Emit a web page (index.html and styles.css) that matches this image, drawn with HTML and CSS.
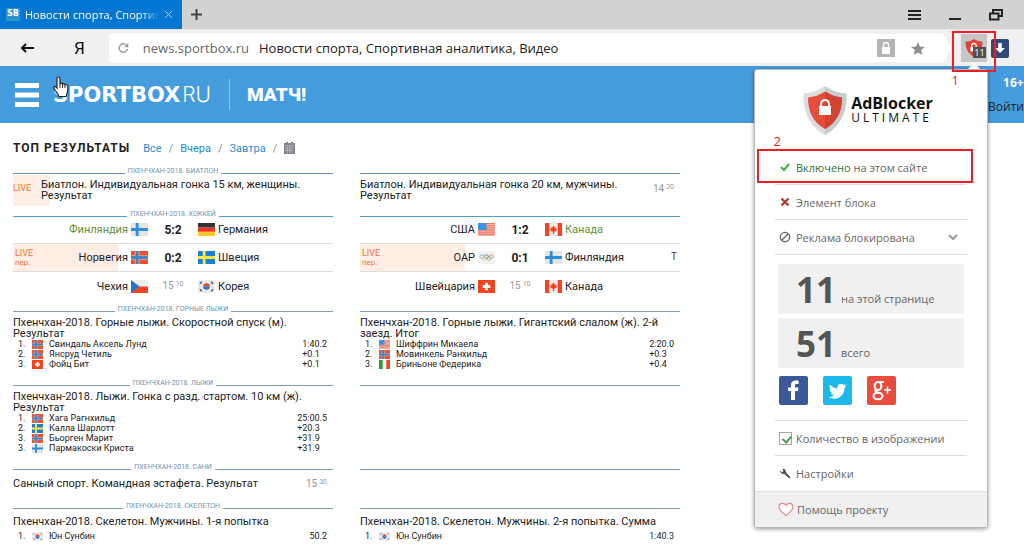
FILE: index.html
```html
<!DOCTYPE html>
<html lang="ru">
<head>
<meta charset="utf-8">
<title>Новости спорта, Спортивная аналитика, Видео</title>
<link rel="stylesheet" href="styles.css">
</head>
<body>
<svg class="defs" aria-hidden="true">
  <symbol id="fi" viewBox="0 0 18 14" preserveAspectRatio="none"><path fill="#e4e6e6" d="M0 0h18v14H0z"/><path fill="#2f8de0" d="M5 0h3v14H5zM0 5.500h18v3H0z"/></symbol>
  <symbol id="no" viewBox="0 0 18 14" preserveAspectRatio="none"><path fill="#f4502c" d="M0 0h18v14H0z"/><path fill="#eba595" d="M4 0h5v14H4zM0 4.500h18v5H0z"/><path fill="#3f86c8" d="M5 0h3v14H5zM0 5.500h18v3H0z"/></symbol>
  <symbol id="se" viewBox="0 0 18 14" preserveAspectRatio="none"><path fill="#1d7fd6" d="M0 0h18v14H0z"/><path fill="#ffe54a" d="M5 0h3v14H5zM0 5.500h18v3H0z"/></symbol>
  <symbol id="ch" viewBox="0 0 18 14" preserveAspectRatio="none"><path fill="#f4431f" d="M0 0h18v14H0z"/><path fill="#fff" d="M7.500 3h3v8h-3zM5 5.500h8v3H5z"/></symbol>
  <symbol id="de" viewBox="0 0 18 14" preserveAspectRatio="none"><path fill="#333" d="M0 0h18v5H0z"/><path fill="#e8391f" d="M0 5h18v4.500H0z"/><path fill="#fdc82f" d="M0 9.500h18V14H0z"/></symbol>
  <symbol id="cz" viewBox="0 0 18 14" preserveAspectRatio="none"><path fill="#eee" d="M0 0h18v7H0z"/><path fill="#f4431f" d="M0 7h18v7H0z"/><path fill="#2874c8" d="M0 0l9 7-9 7z"/></symbol>
  <symbol id="kr" viewBox="0 0 18 14" preserveAspectRatio="none"><path fill="#ebebeb" d="M0 0h18v14H0z"/><path fill="#e8492f" d="M5.500 7a3.500 3.500 0 0 1 7 0z"/><path fill="#2a6fc4" d="M5.500 7a3.500 3.500 0 0 0 7 0z"/><path stroke="#555" stroke-width="1.500" d="M2 4l2-2M14 2l2 2M2 10l2 2M14 12l2-2"/></symbol>
  <symbol id="us" viewBox="0 0 18 14" preserveAspectRatio="none"><path fill="#f7c3b8" d="M0 0h18v14H0z"/><path stroke="#ec6a55" stroke-width="1" d="M0 .5h18M0 2.500h18M0 4.500h18M0 6.500h18M0 8.500h18M0 10.500h18M0 12.500h18"/><path fill="#3f93e6" d="M0 0h9v7.500H0z"/></symbol>
  <symbol id="ca" viewBox="0 0 18 14" preserveAspectRatio="none"><path fill="#ebebeb" d="M0 0h18v14H0z"/><path fill="#f4431f" d="M0 0h4.500v14H0zM13.500 0H18v14h-4.500zM9 2.500l1 2 1.200-.5-.2 2L12.700 6l-.7 2.500-2.400 1V12H8.400V9.500L6 8.500 5.300 6l1.700 0-.2-2 1.200.5z"/></symbol>
  <symbol id="it" viewBox="0 0 18 14" preserveAspectRatio="none"><path fill="#f2f2f2" d="M0 0h18v14H0z"/><path fill="#2c9a3f" d="M0 0h6v14H0z"/><path fill="#f4431f" d="M12 0h6v14h-6z"/></symbol>
  <symbol id="oar" viewBox="0 0 18 14" preserveAspectRatio="none"><path fill="#f3f3f3" d="M0 0h18v14H0z"/><g fill="none" stroke-width="1"><circle cx="4" cy="6" r="2" stroke="#7fb0d8"/><circle cx="9" cy="6" r="2" stroke="#777"/><circle cx="14" cy="6" r="2" stroke="#e09090"/><circle cx="6.500" cy="8" r="2" stroke="#dccb7c"/><circle cx="11.500" cy="8" r="2" stroke="#7ab88a"/></g></symbol>
</svg>

<div class="browser">
  <div class="tabs">
    <div class="tab">
      <span class="favicon">SB</span>
      <span class="tab-title">Новости спорта, Спортив</span>
      <button class="tab-close" aria-label="Закрыть вкладку"><svg width="9" height="9" viewBox="0 0 9 9"><path d="M1 1l7 7M8 1L1 8" stroke="#a9cff2"/></svg></button>
    </div>
    <button class="tab-new" aria-label="Новая вкладка"><svg width="11" height="11" viewBox="0 0 11 11"><path d="M5.500 0v11M0 5.500h11" stroke="#444" stroke-width="2"/></svg></button>
    <div class="window-buttons">
      <button aria-label="Меню"><svg width="13" height="10" viewBox="0 0 13 10"><path d="M0 1h13M0 5h13M0 9h13" stroke="#222" stroke-width="2"/></svg></button>
      <button aria-label="Свернуть"><svg width="12" height="10" viewBox="0 0 12 10"><path d="M0 9h12" stroke="#222" stroke-width="2"/></svg></button>
      <button aria-label="Развернуть"><svg width="14" height="12" viewBox="0 0 14 12"><path d="M4 3.500V1h9v6h-3M1 4.500h8.500v6H1z" fill="none" stroke="#222" stroke-width="2"/></svg></button>
    </div>
  </div>

  <div class="toolbar">
    <button class="back" aria-label="Назад"><svg width="14" height="10" viewBox="0 0 14 10"><path d="M14 5H2M6 1L2 5l4 4" fill="none" stroke="#111" stroke-width="2"/></svg></button>
    <button class="yandex">Я</button>
    <form class="address">
      <button type="button" aria-label="Обновить"><svg width="11" height="12" viewBox="0 0 11 12"><path d="M9.200 4.200A4.200 4.200 0 1 0 9.500 7" fill="none" stroke="#999" stroke-width="1.400"/><path d="M10.300 1v4.200H6.200z" fill="#999"/></svg></button>
      <label for="url">news.sportbox.ru</label>
      <input id="url" type="text" value="Новости спорта, Спортивная аналитика, Видео">
      <button type="button" class="lock" aria-label="Защита"><svg width="18" height="18" viewBox="0 0 18 18"><path fill="#b5b5b5" d="M0 0h18v18H0z"/><path fill="#fff" d="M5 8h8v7H5z"/><path d="M6.500 8V6a2.500 2.500 0 0 1 5 0v2" fill="none" stroke="#fff" stroke-width="1.300"/></svg></button>
      <button type="button" aria-label="В закладки"><svg width="14" height="13" viewBox="0 0 14 13"><path fill="#8e8e8e" d="M7 0l1.900 4.500 5.100.4-3.900 3.200L11.300 13 7 10.400 2.700 13l1.200-4.900L0 4.900l5.100-.4z"/></svg></button>
    </form>
    <button class="extension" aria-label="AdBlocker Ultimate">
      <svg width="18" height="18" viewBox="0 0 18 18"><path fill="#dc4534" d="M9 0c3 2 5.500 2.500 8.500 2.500C17.500 9.500 15 14.500 9 18 3 14.500.5 9.500.5 2.500 3.500 2.500 6 2 9 0z"/><path d="M6.800 8V6.500a2.200 2.200 0 0 1 4.400 0V8" fill="none" stroke="#fff" stroke-width="1.300"/><path fill="#fff" d="M5.500 8h7v4.500h-7z"/></svg>
      <span class="count">11</span>
    </button>
    <button class="download" aria-label="Загрузки"><svg width="18" height="19" viewBox="0 0 18 19"><rect width="18" height="19" rx="2" fill="#2f4a78"/><path fill="#fff" d="M7.200 4h3.600v5H14l-5 5-5-5h3.200z"/></svg></button>
  </div>
</div>

<header class="site-header">
  <button class="burger" aria-label="Разделы"><svg width="24" height="24" viewBox="0 0 24 24"><path d="M0 2.500h24M0 12h24M0 21.500h24" stroke="#fff" stroke-width="5"/></svg></button>
  <a class="logo" href="#"><b>SPORTBOX</b><span>RU</span></a>
  <a class="match" href="#">МАТЧ!</a>
  <div class="account"><b>16+</b><a href="#">Войти</a></div>
</header>

<main class="results">
  <div class="results-head">
    <h1>ТОП РЕЗУЛЬТАТЫ</h1>
    <nav><a href="#">Все</a><i>/</i><a href="#">Вчера</a><i>/</i><a href="#">Завтра</a><i>/</i>
      <svg width="11" height="12" viewBox="0 0 11 12"><path fill="#85828f" d="M0 1h2V0h2v1h3V0h2v1h2v11H0z"/><path stroke="#c4c4cc" stroke-width=".6" d="M1 3.500h9M1 6h9M1 8.500h9M3.500 4v7M5.500 4v7M7.500 4v7"/></svg></nav>
  </div>

  <section class="pair biathlon">
    <div class="event"><h2>Пхенчхан-2018. Биатлон</h2>
      <div class="line-item"><span class="live-box">LIVE</span><p>Биатлон. Индивидуальная гонка 15 км, женщины. Результат</p></div></div>
    <div class="event"><div class="rule"></div>
      <div class="line-item"><p>Биатлон. Индивидуальная гонка 20 км, мужчины. Результат</p><time>14<sup>20</sup></time></div></div>
  </section>

  <section class="pair hockey">
    <div class="event"><h2>Пхенчхан-2018. Хоккей</h2>
      <div class="game"><span class="home won">Финляндия</span><svg><use href="#fi"/></svg><b>5:2</b><svg><use href="#de"/></svg><span>Германия</span></div>
      <div class="game live"><span class="home">Норвегия</span><svg><use href="#no"/></svg><b>0:2</b><svg><use href="#se"/></svg><span>Швеция</span><small>LIVE<em>пер.</em></small></div>
      <div class="game"><span class="home">Чехия</span><svg><use href="#cz"/></svg><time>15<sup>10</sup></time><svg><use href="#kr"/></svg><span>Корея</span></div>
    </div>
    <div class="event"><div class="rule"></div>
      <div class="game"><span class="home">США</span><svg><use href="#us"/></svg><b>1:2</b><svg><use href="#ca"/></svg><span class="won">Канада</span></div>
      <div class="game live"><span class="home">ОАР</span><svg><use href="#oar"/></svg><b>0:1</b><svg><use href="#fi"/></svg><span class="with-note">Финляндия <i>Т</i></span><small>LIVE<em>пер.</em></small></div>
      <div class="game"><span class="home">Швейцария</span><svg><use href="#ch"/></svg><time>15<sup>10</sup></time><svg><use href="#ca"/></svg><span>Канада</span></div>
    </div>
  </section>

  <section class="pair steel">
    <div class="event"><h2>Пхенчхан-2018. Горные лыжи</h2>
      <p>Пхенчхан-2018. Горные лыжи. Скоростной спуск (м). Результат</p>
      <table>
        <tr><td>1.</td><td><svg><use href="#no"/></svg></td><td>Свиндаль Аксель Лунд</td><td>1:40.2</td></tr>
        <tr><td>2.</td><td><svg><use href="#no"/></svg></td><td>Янсруд Четиль</td><td>+0.1</td></tr>
        <tr><td>3.</td><td><svg><use href="#ch"/></svg></td><td>Фойц Бит</td><td>+0.1</td></tr>
      </table></div>
    <div class="event"><div class="rule"></div>
      <p>Пхенчхан-2018. Горные лыжи. Гигантский слалом (ж). 2-й заезд. Итог</p>
      <table>
        <tr><td>1.</td><td><svg><use href="#us"/></svg></td><td>Шиффрин Микаела</td><td>2:20.0</td></tr>
        <tr><td>2.</td><td><svg><use href="#no"/></svg></td><td>Мовинкель Ранхильд</td><td>+0.3</td></tr>
        <tr><td>3.</td><td><svg><use href="#it"/></svg></td><td>Бриньоне Федерика</td><td>+0.4</td></tr>
      </table></div>
  </section>

  <section class="pair steel">
    <div class="event"><h2>Пхенчхан-2018. Лыжи</h2>
      <p>Пхенчхан-2018. Лыжи. Гонка с разд. стартом. 10 км (ж). Результат</p>
      <table>
        <tr><td>1.</td><td><svg><use href="#no"/></svg></td><td>Хага Рагнхильд</td><td>25:00.5</td></tr>
        <tr><td>2.</td><td><svg><use href="#se"/></svg></td><td>Калла Шарлотт</td><td>+20.3</td></tr>
        <tr><td>3.</td><td><svg><use href="#no"/></svg></td><td>Бьорген Марит</td><td>+31.9</td></tr>
        <tr><td>3.</td><td><svg><use href="#fi"/></svg></td><td>Пармакоски Криста</td><td>+31.9</td></tr>
      </table></div>
    <div class="event"><div class="rule"></div></div>
  </section>

  <section class="pair steel luge">
    <div class="event"><h2>Пхенчхан-2018. Сани</h2>
      <div class="line-item"><p>Санный спорт. Командная эстафета. Результат</p><time>15<sup>30</sup></time></div></div>
    <div class="event"><div class="rule"></div></div>
  </section>

  <section class="pair steel skeleton">
    <div class="event"><h2>Пхенчхан-2018. Скелетон</h2>
      <p>Пхенчхан-2018. Скелетон. Мужчины. 1-я попытка</p>
      <table><tr><td>1.</td><td><svg><use href="#kr"/></svg></td><td>Юн Сунбин</td><td>50.2</td></tr></table></div>
    <div class="event"><div class="rule"></div>
      <p>Пхенчхан-2018. Скелетон. Мужчины. 2-я попытка. Сумма</p>
      <table><tr><td>1.</td><td><svg><use href="#kr"/></svg></td><td>Юн Сунбин</td><td>1:40.3</td></tr></table></div>
  </section>
</main>

<aside class="popup">
  <div class="brand">
    <svg width="44" height="49" viewBox="0 0 44 49"><path fill="#d9dddd" d="M22 0c7 5 14 7 21.500 7.500C44 26 38 40 22 49 6 40 0 26 .5 7.500 8 7 15 5 22 0z"/><path fill="#c6cbcb" d="M22 0c7 5 14 7 21.500 7.500C44 26 38 40 22 49z"/><path fill="#e74c3c" d="M22 5.500c5.500 3.500 11 5.500 17 6C39 26 34 36 22 43 10 36 5 26 5 11.500c6-.5 11.500-2.500 17-6z"/><path fill="#d3412f" d="M22 5.500c5.500 3.500 11 5.500 17 6C39 26 34 36 22 43z"/><path fill="#fff" d="M16 20h12v9H16z"/><path d="M18 20v-2a4 4 0 0 1 8 0v2" fill="none" stroke="#fff" stroke-width="2"/></svg>
    <div class="brand-name"><b>AdBlocker</b><span>ULTIMATE</span></div>
  </div>
  <div class="menu">
    <button><svg width="12" height="12" viewBox="0 0 12 12"><path d="M2 6l3 3 5-6" fill="none" stroke="#4ba846" stroke-width="2"/></svg><span><em>Включено</em> на этом сайте</span></button>
    <button><svg width="12" height="12" viewBox="0 0 12 12"><path d="M2.500 2.500l7 7M9.500 2.500l-7 7" stroke="#b5382c" stroke-width="2.300"/></svg><span>Элемент блока</span></button>
    <button><svg width="12" height="12" viewBox="0 0 12 12"><circle cx="6" cy="6" r="4.700" fill="none" stroke="#666" stroke-width="1.300"/><path d="M2.700 9.300l6.600-6.600" stroke="#666" stroke-width="1.300"/></svg><span>Реклама блокирована</span><svg class="chevron" width="10" height="7" viewBox="0 0 10 7"><path d="M1 1l4 4 4-4" fill="none" stroke="#999" stroke-width="2"/></svg></button>
  </div>
  <div class="stats">
    <p><b>11</b> на этой странице</p>
    <p><b>51</b> всего</p>
  </div>
  <div class="social">
    <a href="#" aria-label="Facebook"><svg width="29" height="29" viewBox="0 0 29 29"><rect width="29" height="29" rx="2" fill="#3b5998"/><path fill="#fff" d="M12 24v-9H9v-3.500h3V9c0-3 1.800-4.500 4.500-4.500h3V8h-2c-1.200 0-1.500.6-1.500 1.500v2h3.500L19 15h-3v9z"/></svg></a>
    <a href="#" aria-label="Twitter"><svg width="29" height="29" viewBox="0 0 29 29"><rect width="29" height="29" rx="2" fill="#1cb7eb"/><path fill="#fff" d="M23.500 9.500l-2 .6 1.500-2-2.300.9A3.700 3.700 0 0 0 14.400 12.400 10 10 0 0 1 7 8.600c-1 1.800-.5 3.800 1.100 4.900l-1.600-.4c0 1.700 1.200 3.200 2.900 3.600l-1.600.1c.5 1.500 1.800 2.500 3.400 2.500A7 7 0 0 1 5.500 21c7 4.300 16 .2 16-9z"/></svg></a>
    <a href="#" aria-label="Google+"><svg width="29" height="29" viewBox="0 0 29 29"><rect width="29" height="29" rx="2" fill="#e74c3c"/><g fill="none" stroke="#fff"><ellipse cx="11" cy="10" rx="3.300" ry="4" stroke-width="2.200"/><path d="M12 6h5M9 13.500c-2 1.500 0 2.500 2 3.200" stroke-width="1.800"/><ellipse cx="11" cy="20" rx="4.500" ry="3.300" stroke-width="2"/><path d="M17 14h7M20.500 10.500v7" stroke-width="1.600"/></g></svg></a>
  </div>
  <div class="menu options">
    <label><input type="checkbox" checked><span>Количество в изображении</span></label>
    <button><svg width="12" height="12" viewBox="0 0 12 12"><path fill="#555" d="M1 2.500l2 1.700L4.500 3 3.200 1c2-.6 4 .8 3.700 3.200l4.200 4.500c.8.900-.5 2.200-1.400 1.400L5.300 6C3.300 6.500 1 5 1 2.500z"/></svg><span>Настройки</span></button>
  </div>
  <button class="help"><svg width="16" height="15" viewBox="0 0 16 15"><path d="M8 13.500C4 10.500 1 8 1 4.800 1 1 6 0 8 3.500 10 0 15 1 15 4.800 15 8 12 10.500 8 13.500z" fill="#fff" stroke="#e58a93" stroke-width="1.200"/></svg><span>Помощь проекту</span></button>
</aside>

<div class="mark mark-extension"></div><span class="step step-one">1</span>
<div class="mark mark-enabled"></div><span class="step step-two">2</span>
<svg class="cursor" width="16" height="22" viewBox="0 0 16 22"><path fill="#fff" stroke="#222" stroke-width="1.200" d="M4 12V2.500C4 .5 7 .5 7 2.500V8c.5-1.200 2.500-1 2.600.3C10.300 7.300 12 7.600 12 9c1-.8 2.800-.3 2.800 1.300V14c0 3-1.300 4-1.600 6.500H6C5.500 18 2.500 15.500 1 12.500 0 11 2 9.800 3 11z"/><path stroke="#222" d="M7 8v4M9.600 9v3M12 9.500V12"/></svg>
</body>
</html>
```
FILE: styles.css
```css
* { box-sizing: border-box; }
body {
  margin: 0;
  height: 100vh;
  overflow: hidden;
  position: relative;
  background: #fff;
  color: #222;
  font-family: Roboto, "Liberation Sans", sans-serif;
  font-size: 11px;
}
button { border: 0; padding: 0; background: none; font: inherit; color: inherit; display: flex; align-items: center; }
a { text-decoration: none; color: inherit; }
h1, h2, p { margin: 0; }
i, em { font-style: normal; }
svg { display: block; flex: none; }
.defs { position: absolute; width: 0; height: 0; }

/* browser chrome */
.browser { font-family: "Open Sans", "Noto Sans", sans-serif; }
.tabs { display: flex; height: 30px; background: #d2d2d2; border-bottom: 1px solid #e4e4e4; }
.tab { display: flex; align-items: center; gap: 5px; width: 182px; padding: 0 9px 0 6px; background: #0477d2; color: #fff; font-size: 11px; }
.favicon { width: 14px; height: 13px; background: #2d93c9; font: bold 8px/12px "DejaVu Sans", sans-serif; text-align: center; }
.tab-title { flex: 1; overflow: hidden; white-space: nowrap; mask-image: linear-gradient(90deg, #000 88%, transparent); }
.tab-new { padding: 0 9px; }
.window-buttons { display: flex; align-items: center; gap: 28px; margin-left: auto; padding-right: 21px; }
.toolbar { display: flex; align-items: center; height: 36px; padding-right: 15px; background: #f0f0f0; }
.back { padding: 0 20px; }
.yandex { padding: 0 20px; margin-right: 4px; font: 17px Roboto, sans-serif; color: #111; }
.address { flex: 1; display: flex; align-items: center; height: 28px; padding: 0 26px 0 9px; background: #fff; clip-path: polygon(0 0, calc(100% - 7px) 0, 100% 50%, calc(100% - 7px) 100%, 0 100%); font-size: 13px; }
.address label { margin: 0 10px 0 14px; color: #666; }
.address input { flex: 1; min-width: 0; border: 0; padding: 0; font: inherit; color: #222; }
.lock { margin-right: 16px; }
.extension { position: relative; justify-content: center; width: 26px; height: 28px; margin-left: 10px; background: #c6c6c6; }
.count { position: absolute; right: 1px; bottom: 4px; width: 13px; background: #505050; color: #fff; font-size: 9px; line-height: 11px; text-align: center; }
.download { margin-left: 4px; }

/* site header */
.site-header { display: flex; align-items: center; height: 57px; padding-left: 15px; background: #459cdd; color: #fff; }
.logo { display: flex; align-items: center; gap: 2px; margin-left: 14px; padding-right: 18px; height: 31px; border-right: 1px solid #8fc4eb; font: 21px "DejaVu Sans", sans-serif; }
.logo span { font: 300 21px Inter, sans-serif; }
.match { margin-left: 17px; font: 900 19px Roboto, sans-serif; }
.account { display: flex; flex-direction: column; gap: 8px; margin-left: auto; font-family: "Open Sans", sans-serif; font-size: 12px; line-height: 16px; }
.account b { padding-left: 15px; }
.account a { color: #222; }

/* results */
.results { padding: 0 344px 0 13px; }
.results-head { display: flex; align-items: center; gap: 13px; height: 44px; padding-top: 6px; }
.results-head h1 { font-size: 12px; font-weight: 700; letter-spacing: 1px; }
.results-head nav { display: flex; align-items: center; gap: 7px; color: #888; font-size: 11px; }
.results-head a { color: #2a8bd4; }
.pair { display: grid; grid-template-columns: 1fr 1fr; gap: 27px; --line: #7c9fb7; }
.event { padding-bottom: 10px; }
.event h2 { display: flex; align-items: flex-end; gap: 3px; height: 8px; margin-bottom: 4px; color: #6f93ad; font-size: 7px; font-weight: 400; line-height: 8px; text-transform: uppercase; }
.event h2::before, .event h2::after { content: ""; flex: 1; height: 1px; margin-bottom: 1px; background: var(--line); }
.rule { height: 7px; margin-bottom: 5px; border-bottom: 1px solid var(--line); }
.event p { line-height: 11px; }
.biathlon { --line: #6f8fb7; }
.hockey { --line: #4da3c4; }
.biathlon .event, .hockey .event { padding-bottom: 5px; }
.line-item { display: flex; justify-content: space-between; }
.line-item time { padding: 4px 6px 0 0; }
.biathlon .line-item { min-height: 26px; }
.live-box { flex: none; width: 37px; height: 31px; margin: -4px -9px -1px 0; background: #ffeee4; color: #f4713a; font-size: 9px; line-height: 27px; }
.biathlon p { flex: 1; position: relative; }
time { color: #999; font-size: 10px; line-height: 12px; white-space: nowrap; }
sup { margin-left: 2px; font-size: 7px; line-height: 1; vertical-align: 3px; }
.game { position: relative; display: grid; grid-template-columns: 1fr 17px 44px 17px 1fr; gap: 3px; align-items: center; height: 28px; border-bottom: 1px solid #ddd; }
.hockey h2 { margin-bottom: -2px; }
.hockey .rule { margin-bottom: -1px; }
.game:last-child { border-bottom: 0; }
.game svg { width: 17px; height: 13px; }
.game b, .game time { text-align: center; font-weight: 700; }
.game b { font-size: 12px; }
.game time { font-weight: 400; }
.home { position: relative; z-index: 1; text-align: right; }
.won { color: #5c8f3c; }
.with-note { display: flex; justify-content: space-between; padding-right: 3px; }
.with-note i { color: #5a2a6a; font-size: 10px; }
.game small { position: absolute; left: 0; top: 0; bottom: 0; width: 105px; padding: 5px 2px; background: #ffeee4; color: #f4713a; font-size: 9px; line-height: 9px; }
.game.live svg { position: relative; }
.game em { display: block; font-size: 8px; }
table { width: 100%; padding: 0 6px 0 5px; border-spacing: 0; font-size: 9px; line-height: 10px; }
td { padding: 0; height: 10px; }
td:nth-child(1) { width: 14px; }
td:nth-child(2) { width: 17px; }
td:nth-child(4) { width: 1px; white-space: nowrap; }
td svg { width: 11px; height: 9px; }
.luge .line-item { padding-top: 3px; }
.luge .line-item time { padding-top: 0; }
.luge .event { padding-bottom: 12px; }
.skeleton p { padding: 2px 0 4px; }

/* extension popup */
.popup { position: absolute; top: 69px; right: 36px; width: 234px; background: #fff; border: 1px solid #b8b8b8; border-radius: 3px; box-shadow: 0 1px 4px rgba(0, 0, 0, .4); color: #666; font-family: "Open Sans", "Noto Sans", sans-serif; font-size: 11px; }
.popup::before { content: ""; position: absolute; top: -7px; right: 7px; border: 6px solid transparent; border-top: 0; border-bottom-color: #fff; }
.brand { display: flex; align-items: center; justify-content: center; gap: 4px; height: 80px; padding-right: 6px; }
.brand-name { display: flex; flex-direction: column; color: #111; }
.brand-name b { font-size: 16px; line-height: 16px; }
.brand-name span { font-size: 12px; letter-spacing: 3px; line-height: 14px; }
.menu { margin: 0 20px; }
.menu button, .menu label { display: flex; align-items: center; gap: 5px; width: 100%; height: 35px; padding-left: 4px; border-bottom: 1px solid #ddd; }
.menu em { color: #2f6f2f; }
.chevron { margin: 0 9px 0 auto; }
.stats { display: grid; gap: 4px; margin: 9px 23px 8px; }
.stats p { display: flex; align-items: baseline; gap: 5px; height: 50px; padding-left: 18px; background: #f0f0f0; line-height: 52px; }
.stats b { color: #555; font-size: 35px; }
.social { display: flex; gap: 15px; margin: 0 24px 15px; }
.options { border-top: 1px solid #ddd; }
.options button { border-bottom: 0; }
.options input { appearance: none; width: 13px; height: 13px; margin: 0 -1px 0 0; border: 1px solid #aaa49a; outline: 0; }
.options input::after { content: ""; display: block; width: 4px; height: 7px; margin: 1px 0 0 4px; border: solid #4f9a57; border-width: 0 2px 2px 0; transform: rotate(42deg); }
.help { gap: 3px; width: 100%; height: 36px; padding-left: 23px; background: #f0f0f0; border-top: 1px solid #ddd; }

/* annotations */
.mark { position: absolute; border: 2px solid #ee1c25; }
.mark-extension { top: 31px; right: 28px; width: 44px; height: 41px; }
.mark-enabled { top: 149px; right: 51px; width: 216px; height: 34px; }
.step { position: absolute; color: #ee1c25; font: 13px/16px "Open Sans", sans-serif; }
.step-one { top: 72px; right: 65px; }
.step-two { top: 133px; right: 243px; }
.cursor { position: absolute; left: 53px; top: 76px; }
```
